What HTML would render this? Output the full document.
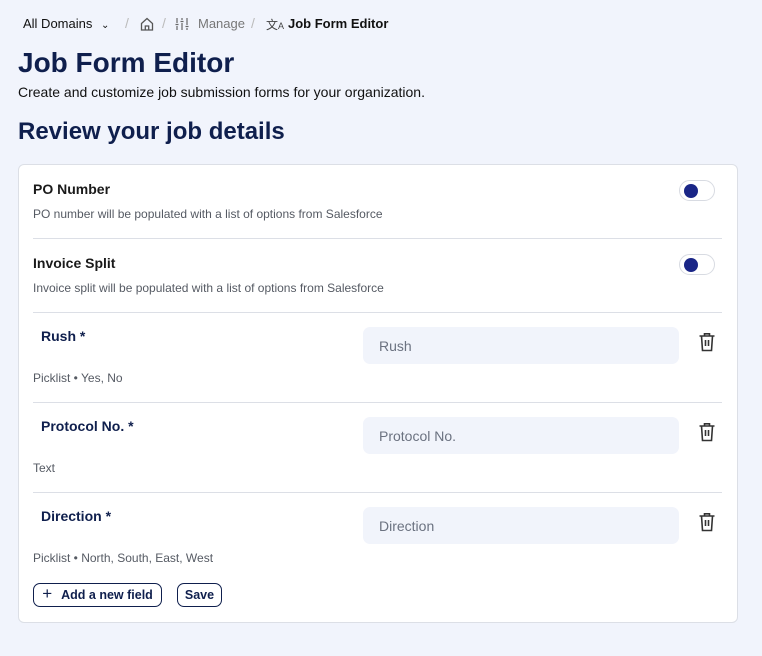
<!DOCTYPE html>
<html><head><style>
*{box-sizing:border-box;margin:0;padding:0}
body{width:762px;height:656px;background:#f1f4fc;font-family:"Liberation Sans",sans-serif;color:#0f1f4d;position:relative;overflow:hidden}
.a{position:absolute;white-space:nowrap}
.card{position:absolute;left:18px;top:164px;width:720px;height:459px;background:#fff;border:1px solid #dcdfe6;border-radius:6px}
.hr{position:absolute;left:33px;width:689px;height:1px;background:#dcdfe6}
.t{font-weight:bold;font-size:14px;color:#1a1a1a}
.d{font-size:12px;color:#555a63}
.tog{position:absolute;left:679px;width:36px;height:21px;border:1px solid #d8dbe2;border-radius:11px;background:#fff}
.tog:after{content:"";position:absolute;left:4px;top:3px;width:14px;height:14px;border-radius:50%;background:#1a2687}
.f{font-weight:bold;font-size:14px;color:#0f1f4d}
.in{position:absolute;left:363px;width:316px;height:37px;background:#f1f4fb;border-radius:7px;font-size:14px;color:#6b7280;padding:11px 16px}
.tr{position:absolute;left:698px}
.btn{position:absolute;top:583px;height:24px;border:1.5px solid #0f1f4d;border-radius:7px;font-weight:bold;font-size:12.5px;color:#0f1f4d;white-space:nowrap;display:flex;align-items:center;justify-content:center}
</style></head><body>
<div class="a" style="left:23px;top:16px;font-size:13px;color:#111">All Domains <span style="font-size:10px;margin-left:5px">&#8964;</span></div>
<div class="a" style="left:125px;top:15px;font-size:14px;color:#bbb">/</div>
<svg class="a" style="left:140px;top:17px" width="14" height="14" viewBox="0 0 14 14" fill="none" stroke="#555" stroke-width="1.3"><path d="M1.5 6.5L7 1.5l5.5 5V13h-11z"/><path d="M5.3 13V9h3.4v4"/></svg>
<div class="a" style="left:162px;top:15px;font-size:14px;color:#bbb">/</div>
<svg class="a" style="left:175px;top:17px" width="14" height="14" viewBox="0 0 14 14" stroke="#666" stroke-width="1.2"><path d="M2 1v5M2 9v4M7 1v2M7 6v7M12 1v7M12 11v2M0.5 7.5h3M5.5 4.5h3M10.5 9.5h3"/></svg>
<div class="a" style="left:198px;top:16px;font-size:13px;color:#777">Manage</div>
<div class="a" style="left:251px;top:15px;font-size:14px;color:#bbb">/</div>
<div class="a" style="left:266px;top:16px;font-size:12px;color:#444">文<span style="font-size:9px">A</span></div>
<div class="a" style="left:288px;top:16px;font-size:13px;font-weight:bold;color:#111">Job Form Editor</div>
<div class="a" style="left:18px;top:47px;font-size:28px;font-weight:bold">Job Form Editor</div>
<div class="a" style="left:18px;top:84px;font-size:14px;color:#111">Create and customize job submission forms for your organization.</div>
<div class="a" style="left:18px;top:118px;font-size:24px;font-weight:bold">Review your job details</div>
<div class="card"></div>
<div class="a t" style="left:33px;top:181px">PO Number</div>
<div class="a d" style="left:33px;top:207px">PO number will be populated with a list of options from Salesforce</div>
<div class="tog" style="top:180px"></div>
<div class="hr" style="top:238px"></div>
<div class="a t" style="left:33px;top:255px">Invoice Split</div>
<div class="a d" style="left:33px;top:281px">Invoice split will be populated with a list of options from Salesforce</div>
<div class="tog" style="top:254px"></div>
<div class="hr" style="top:312px"></div>

<div class="a f" style="left:41px;top:328px">Rush *</div>
<div class="in" style="top:327px">Rush</div>
<div class="a d" style="left:33px;top:371px">Picklist • Yes, No</div>
<div class="hr" style="top:402px"></div>
<div class="a f" style="left:41px;top:418px">Protocol No. *</div>
<div class="in" style="top:417px">Protocol No.</div>
<div class="a d" style="left:33px;top:461px">Text</div>
<div class="hr" style="top:492px"></div>
<div class="a f" style="left:41px;top:508px">Direction *</div>
<div class="in" style="top:507px">Direction</div>
<div class="a d" style="left:33px;top:551px">Picklist • North, South, East, West</div>

<svg class="tr" style="top:332px" width="18" height="20" viewBox="0 0 18 20" fill="none" stroke="#333" stroke-width="1.6"><path d="M1.5 4h15M6.5 4V1.8h5V4M3.5 4l1 14.5h9l1-14.5M7.5 8v6M10.5 8v6"/></svg>
<svg class="tr" style="top:422px" width="18" height="20" viewBox="0 0 18 20" fill="none" stroke="#333" stroke-width="1.6"><path d="M1.5 4h15M6.5 4V1.8h5V4M3.5 4l1 14.5h9l1-14.5M7.5 8v6M10.5 8v6"/></svg>
<svg class="tr" style="top:512px" width="18" height="20" viewBox="0 0 18 20" fill="none" stroke="#333" stroke-width="1.6"><path d="M1.5 4h15M6.5 4V1.8h5V4M3.5 4l1 14.5h9l1-14.5M7.5 8v6M10.5 8v6"/></svg>

<div class="btn" style="left:33px;width:129px"><span style="font-size:17px;font-weight:normal;margin-right:9px;margin-top:-2px">+</span>Add a new field</div>
<div class="btn" style="left:177px;width:45px">Save</div>
</body></html>
